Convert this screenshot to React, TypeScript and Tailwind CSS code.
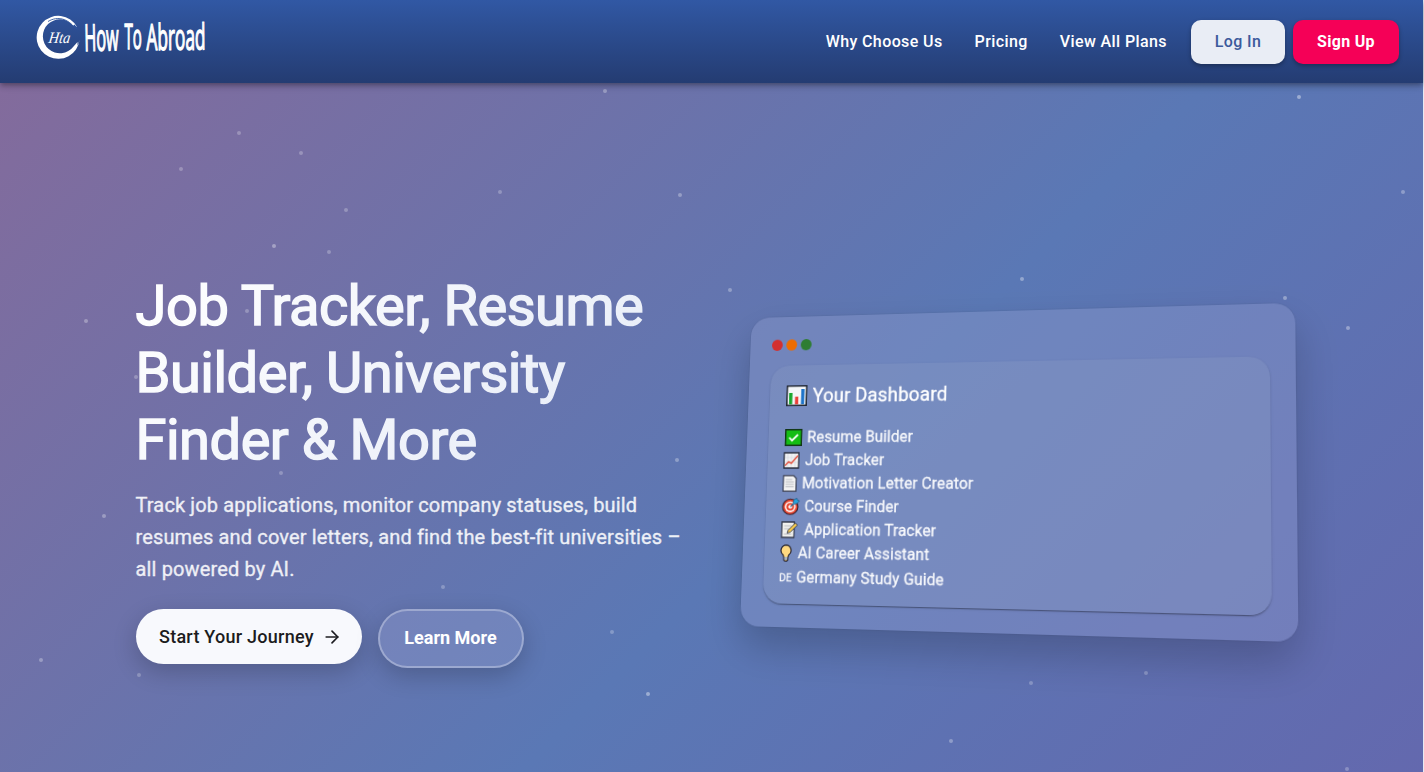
import type { ReactNode } from 'react';
import { ArrowRight } from 'lucide-react';

const NAV_LINKS = ['Why Choose Us', 'Pricing', 'View All Plans'];

// [x, y, opacity] of the floating particles, measured from the top of the page
const PARTICLES: [number, number, number][] = [
  [605, 91, 0.3], [1299, 97, 0.4], [239, 133, 0.25], [301, 153, 0.25], [181, 169, 0.25],
  [500, 192, 0.25], [680, 195, 0.3], [1403, 192, 0.3], [346, 210, 0.25], [274, 246, 0.35],
  [329, 252, 0.25], [1022, 279, 0.35], [730, 290, 0.3], [1285, 298, 0.35], [247, 311, 0.25],
  [86, 321, 0.3], [1348, 328, 0.35], [136, 377, 0.25], [677, 460, 0.3], [281, 473, 0.25],
  [104, 516, 0.3], [443, 587, 0.25], [612, 632, 0.25], [41, 660, 0.3], [139, 675, 0.25],
  [1146, 673, 0.25], [1031, 683, 0.25], [648, 694, 0.4], [951, 741, 0.3], [1347, 769, 0.25],
];

function Logo() {
  return (
    <svg width="180" height="64" viewBox="0 -8 180 64" className="text-white" fill="currentColor">
      <path d="M41 12A21.5 21.5 0 1 0 43.5 25L41.5 31L41.5 27L37.5 31.5A17 17 0 1 1 37 10.5Z" />
      <path d="M12 6.5C22 .5 32 4 39 13" fill="none" stroke="#2d539c" strokeWidth=".9" />
      <path d="M38 10L41 14" stroke="#2d539c" strokeWidth="1.4" />
      <text transform="translate(12 28) skewX(-8) scale(.9 1)" fontSize="16" fontStyle="italic" fontFamily="Liberation Serif, serif">Hta</text>
      <g fontFamily="Open Sans, sans-serif" stroke="currentColor" strokeWidth="1.4">
        <text transform="translate(48.5 36) rotate(-1) scale(.44 1)" fontSize="37">How</text>
        <text transform="translate(88.5 33.5) scale(.43 1)" fontSize="35">To</text>
        <text transform="translate(110.5 35) rotate(-.5) scale(.48 1)" fontSize="36">Abroad</text>
      </g>
    </svg>
  );
}

function ChartIcon() {
  return (
    <svg width="23" height="22" viewBox="0 0 22 22" preserveAspectRatio="none" className="mr-1.5">
      <path d="M.8.8h20.4v20.4H.8z" fill="#f4f6f8" stroke="#1d2430" strokeWidth="1.5" />
      <path d="M3 8h3.4v12H3z" fill="#16a62c" />
      <path d="M9.3 12h3.4v8H9.3z" fill="#e8403a" />
      <path d="M15.6 4H19v16h-3.4z" fill="#1d73c9" />
    </svg>
  );
}

const iconProps = { height: 18, viewBox: '0 0 18 18' };

const checkIcon = (
  <svg {...iconProps} width={19} preserveAspectRatio="none">
    <path d="M.7.7h16.6v16.6H.7z" fill="#14bd14" stroke="#123318" strokeWidth="1.4" />
    <path d="m4.5 9 3 3.2L13.5 6" fill="none" stroke="#fff" strokeWidth="1.8" />
  </svg>
);
const trendIcon = (
  <svg {...iconProps} width={18}>
    <path d="M1 1h16v16H1z" fill="#f1f2f4" stroke="#252a3b" strokeWidth="1.3" />
    <path d="M5 2v14M9 2v14M13 2v14M2 6h14M2 11h14" stroke="#d2d5dc" strokeWidth=".6" />
    <path d="m2 14.5 4-4 3 1.5 7-8" fill="none" stroke="#e2513f" strokeWidth="1.5" />
  </svg>
);
const pageIcon = (
  <svg {...iconProps} width={16} viewBox="0 0 16 18">
    <path d="M1 .8h11l3 3v13.4H1z" fill="#f3f3f3" stroke="#343a4d" strokeWidth="1.2" />
    <path d="M3.5 5h7M3.5 7.5h9M3.5 10h9M3.5 12.5h9" stroke="#b3b6bb" strokeWidth=".9" />
  </svg>
);
const targetIcon = (
  <svg {...iconProps} width={20} viewBox="0 0 19 18" preserveAspectRatio="none">
    <circle cx="9" cy="9.3" r="8" fill="#e8442f" stroke="#3a2430" strokeWidth="1.1" />
    <circle cx="9" cy="9.3" r="5.6" fill="#fff" />
    <circle cx="9" cy="9.3" r="4" fill="#e8442f" />
    <circle cx="9" cy="9.3" r="2" fill="#fff" />
    <path d="m9 9.3 3-4 .2-3L15.5.3l.8 2 2 .8-2.5 2.9-2.6.4z" fill="#27a3dd" stroke="#1f4e77" strokeWidth=".7" />
  </svg>
);
const memoIcon = (
  <svg {...iconProps} width={19} viewBox="0 0 19 18">
    <path d="M1 1h13.5v16H1z" fill="#f1f1ee" stroke="#343a4d" strokeWidth="1.3" />
    <path d="M3.5 5h8M3.5 8h6M3.5 13.5h8" stroke="#b3b6bb" strokeWidth=".9" />
    <path d="m7 12.5 1-3L15.5 2l2.5 2.2-7.6 7.3z" fill="#f3c74c" stroke="#343a4d" strokeWidth=".9" />
  </svg>
);
const bulbIcon = (
  <svg {...iconProps} width={13} viewBox="0 0 13 18">
    <path d="M6.5.8a5.6 5.6 0 0 0-3.2 10.1l1 3v2.4l1.2 1h2l1.2-1v-2.4l1-3A5.6 5.6 0 0 0 6.5.8Z" fill="#ffd980" stroke="#292733" strokeWidth="1.3" />
    <path d="M4.8 13h3.4v3H4.8z" fill="#aab4c2" />
  </svg>
);

const FEATURES: { icon: ReactNode; iconBox: string; label: string }[] = [
  { icon: checkIcon, iconBox: 'w-[24.5px]', label: 'Resume Builder' },
  { icon: trendIcon, iconBox: 'w-[24px] -ml-px', label: 'Job Tracker' },
  { icon: pageIcon, iconBox: 'w-[21.5px] -ml-px', label: 'Motivation Letter Creator' },
  { icon: targetIcon, iconBox: 'w-[25px] -ml-px', label: 'Course Finder' },
  { icon: memoIcon, iconBox: 'w-[25.5px] -ml-px', label: 'Application Tracker' },
  { icon: bulbIcon, iconBox: 'w-[19.5px] -ml-px', label: 'AI Career Assistant' },
  { icon: <span className="text-[11px]">DE</span>, iconBox: 'w-[17.5px] -ml-px mr-px', label: 'Germany Study Guide' },
];

function Navbar() {
  return (
    <header className="relative z-10 flex h-[83px] items-center justify-between bg-linear-to-b from-[#3158a4] to-[#243c72] pr-6 pl-9 shadow-[0_2px_4px_-1px_rgba(0,0,0,0.2),0_4px_5px_rgba(0,0,0,0.14),0_1px_10px_rgba(0,0,0,0.12)]">
      <div className="-mt-[5px]">
        <Logo />
      </div>
      <nav className="flex items-center text-base font-medium tracking-[0.4px] text-white">
        {NAV_LINKS.map((link) => (
          <a key={link} href="#" className="mr-8 last-of-type:mr-6">{link}</a>
        ))}
        <button className="mr-2 h-11 w-[94px] rounded-[10px] bg-[#e9edf5] text-[#3c5a9c] shadow-[0_2px_4px_rgba(0,0,0,0.3)]">Log In</button>
        <button className="h-11 w-[106px] rounded-[10px] bg-[#f50057] font-bold tracking-[0.3px] shadow-[0_2px_4px_rgba(0,0,0,0.3)]">Sign Up</button>
      </nav>
    </header>
  );
}

function DashboardCard() {
  return (
    <div className="w-[558px] justify-self-center rounded-[20px] bg-[#9ba6d4]/30 p-6 shadow-[0_20px_40px_rgba(0,0,0,0.2),0_0_2px_rgba(0,0,0,0.15)] [transform:perspective(1000px)_rotateY(-10deg)_rotateX(5deg)]">
      <div className="mb-4 flex gap-1">
        <span className="size-3 rounded-full bg-[#d32f2f]" />
        <span className="size-3 rounded-full bg-[#ed6c02]" />
        <span className="size-3 rounded-full bg-[#2e7d32]" />
      </div>
      <div className="rounded-[20px] bg-[#8a9cc2]/30 pt-4 pr-4 pb-3.5 pl-[18px] text-white shadow-[0_2px_1px_-1px_rgba(0,0,0,0.2),0_1px_1px_rgba(0,0,0,0.14),0_1px_3px_rgba(0,0,0,0.12)]">
        <h6 className="mb-4 flex h-8 items-center text-xl font-normal tracking-[0.0075em] [-webkit-text-stroke:0.3px_white]">
          <ChartIcon />
          Your Dashboard
        </h6>
        <ul className="text-base/6 tracking-[0.00938em] text-white/90 [-webkit-text-stroke:0.3px]">
          {FEATURES.map(({ icon, iconBox, label }) => (
            <li key={label} className="flex items-center">
              <span className={iconBox}>{icon}</span>
              {label}
            </li>
          ))}
        </ul>
      </div>
    </div>
  );
}

export default function App() {
  return (
    <div className="h-[772px] overflow-hidden bg-[#e6eaf3] pr-px font-[Roboto,sans-serif]">
      <Navbar />
      <main className="relative h-[774px] bg-[linear-gradient(135deg,#836b9c_0%,#5a78b5_55%,#6664ac_108%)]">
        {PARTICLES.map(([x, y, opacity]) => (
          <span
            key={`${x}-${y}`}
            className="absolute size-1 rounded-full bg-white"
            style={{ left: x - 2, top: y - 85, opacity }}
          />
        ))}
        <div className="relative mx-auto grid h-full w-[1152px] grid-cols-2 items-center gap-8">
          <section>
            <h1 className="mb-[15px] bg-linear-[135deg] from-white to-[#e3e9f6] bg-clip-text pt-px text-[56px] leading-[67.2px] font-normal tracking-[-0.48px] text-transparent [-webkit-text-stroke:1.6px_transparent]">
              Job Tracker, Resume Builder, University Finder &amp; More
            </h1>
            <p className="mb-6 text-xl leading-8 tracking-[0.14px] text-white/85 [-webkit-text-stroke:0.3px]">
              Track job applications, monitor company statuses, build resumes and cover letters, and find the best-fit universities – all powered by AI.
            </p>
            <div className="flex items-start gap-4 text-lg font-medium">
              <button className="flex h-[55px] w-[226px] items-center gap-2 rounded-full bg-[#f8f9fd] pl-[23.5px] tracking-[0.25px] text-[#1c1c20] shadow-[0_8px_25px_rgba(0,0,0,0.2)]">
                Start Your Journey
                <ArrowRight size={20} strokeWidth={2} />
              </button>
              <button className="h-[59px] w-[146px] rounded-full border-2 border-white/30 bg-[#9ba6d4]/30 pb-px font-bold text-white shadow-[0_8px_25px_rgba(0,0,0,0.2)]">
                Learn More
              </button>
            </div>
          </section>
          <DashboardCard />
        </div>
      </main>
    </div>
  );
}
